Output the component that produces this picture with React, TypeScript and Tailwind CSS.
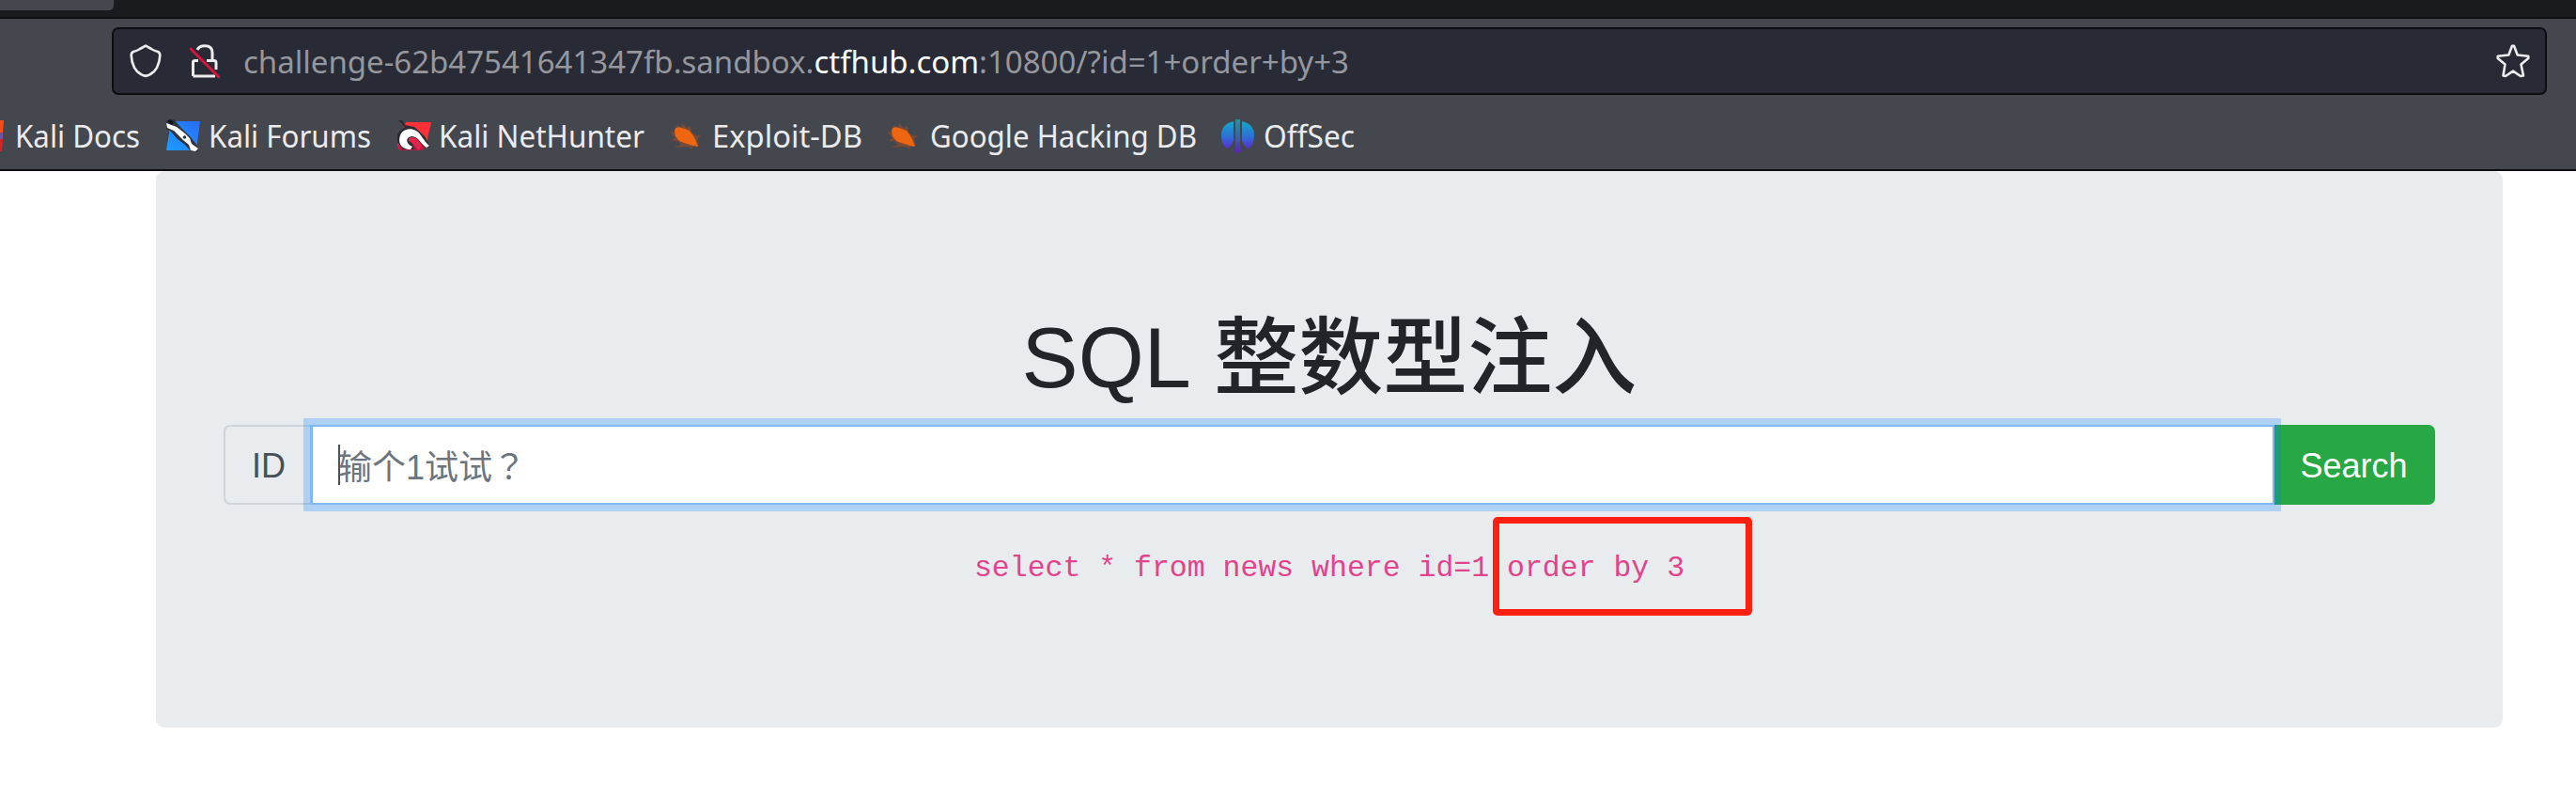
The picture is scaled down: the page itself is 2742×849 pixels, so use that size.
import type { ReactNode } from "react";

const Shield = () => (
  <svg className="h-9 w-[34px]" viewBox="0 0 34 36" fill="none" stroke="#ececee" strokeWidth="2.7" strokeLinejoin="round">
    <path d="M17 1.6L23 5Q26 7 30 8Q32.3 9 32.3 12Q32 19 29 25Q27 29 22 32Q17 35.5 12 32Q7 29 5 25Q2 19 1.7 12Q1.7 9 4 8Q8 7 11 5Z" />
  </svg>
);

const InsecureLock = () => (
  <svg className="h-9 w-8" viewBox="0 0 32 36" fill="none">
    <path d="M8 6Q10 1.8 16 1.8Q24 1.8 24 9V17M3.5 34V19Q3.5 17.5 6 17.5H9M18 17.5H26Q28 17.5 28 20V27M3.5 34H27" stroke="#ececee" strokeWidth="3" />
    <path d="M1 5L31 35" stroke="#d7153f" strokeWidth="3" strokeLinecap="round" />
  </svg>
);

const Star = () => (
  <svg className="h-9 w-9" viewBox="0 0 36 36" fill="none" stroke="#ececee" strokeWidth="2.6" strokeLinejoin="round">
    <path d="M17 1.8H19L22.7 11.5L34.3 12.7V15L26.5 21.4L29 33.5L26 34L18 28.6L10 34L7.5 33.5L9.5 21.4L1.7 15V12.7L13.3 11.5Z" />
  </svg>
);

const ForumsIcon = () => (
  <svg className="h-9 w-9" viewBox="0 0 36 36">
    <defs>
      <linearGradient id="forums" x1="1" y1="0" x2="0" y2="1">
        <stop stopColor="#2a6cf6" />
        <stop offset="1" stopColor="#1b9dff" />
      </linearGradient>
    </defs>
    <path d="M5 2H36L32 33H0L3 15Z" fill="url(#forums)" />
    <path d="M0 1L8 0L15 8L26 19L33 28L34 35L26 34L20 27L12 21L4 12L0 11Z" fill="#30343c" />
    <path d="M0 4L11 8L20 15L25 20L27 26L34 31L31 34L26 33L24 27L18 22L12 16L8 12L1 9Z" fill="#fff" />
    <path d="M1 2L4 0L8 3L6 6Z" fill="#111" />
    <circle cx="19.5" cy="19" r="1.8" fill="#333" />
  </svg>
);

const NetHunterIcon = () => (
  <svg className="h-9 w-9" viewBox="0 0 36 36">
    <path d="M9 3H36L31 25L26 33H2L0 27Z" fill="#ff3038" />
    <path d="M0 20L9 12L27 20L33 28L26 33H2Z" fill="#b71845" />
    <path d="M1 1H5L8 6L18 8L29 18L35 29L29 30L20 20L14 21L18 32H6L0 24V15L8 8Z" fill="#292b33" />
    <path d="M14 32C2 32 0 22 4 15C9 8 20 9 25 17C28 21 31 26 34 28L31 30C25 27 23 18 15 18C8 19 9 26 16 29Z" fill="#fff" />
    <path d="M12 20Q20 16 26 29L22 33Q18 26 12 23Z" fill="#e5244c" />
  </svg>
);

const BugIcon = () => (
  <svg className="h-[30px] w-[34px]" viewBox="0 0 34 30">
    <path d="M7 3L12 6L13 1L18 6L22 4L23 11L28 14L34 15L29 17L31 25L25 26L24 29L20 26L4 27L12 24L8 20L2 20L6 16L0 11L5 10Z" fill="#a9501f" opacity=".5" />
    <path d="M5 8Q7 4 13 6L21 9L24 13L27 18L30 26L25 25L18 23L10 20L6 15Z" fill="#ee6512" />
  </svg>
);

const OffSecIcon = () => (
  <svg className="h-9 w-[35px]" viewBox="0 0 35 36">
    <defs>
      <linearGradient id="offsec" x1="0" y1="0" x2="0" y2="36" gradientUnits="userSpaceOnUse">
        <stop offset=".05" stopColor="#12a9c8" />
        <stop offset=".5" stopColor="#2d71d6" />
        <stop offset="1" stopColor="#6714d1" />
      </linearGradient>
    </defs>
    <path d="M13 2Q0 5 0 17Q0 27 6 31Q10 30 13 23ZM22 2Q35 5 35 17Q35 27 29 31Q25 30 22 23Z" fill="url(#offsec)" />
    <path d="M15 0H20L20 26L21 34Q17.5 38 14 34L15 26Z" fill="url(#offsec)" opacity=".75" />
  </svg>
);

const Bookmark = ({ icon, label, width, className }: { icon?: ReactNode; label: string; width: number; className: string }) => (
  <div className={`flex shrink-0 items-center ${className}`}>
    {icon}
    <svg className="h-12 shrink-0 overflow-visible" style={{ width }} aria-label={label}>
      <text x="0" y="36" textLength={width} lengthAdjust="spacingAndGlyphs" fill="#ebebed" className="font-['Noto_Sans'] text-[33px]">
        {label}
      </text>
    </svg>
  </div>
);

export default function App() {
  return (
    <div className="h-[849px] w-[2742px] overflow-hidden bg-white font-['Liberation_Sans','Noto_Sans_CJK_SC',sans-serif]">
      <header className="flex h-[182px] flex-col border-b-2 border-[#0c0e12] bg-[#44474e]">
        <div className="h-5 shrink-0 border-b-2 border-[#0e0f13] bg-[#1a1b1f]">
          <div className="h-[11px] w-[121px] rounded-br-[5px] bg-[#44474e]" />
        </div>
        <div className="mt-[9px] ml-[119px] flex h-[72px] w-[2592px] shrink-0 items-center rounded-[7px] border-2 border-[#0c0e12] bg-[#282a36] pr-4 pl-[17px]">
          <Shield />
          <div className="ml-[30px]"><InsecureLock /></div>
          <div className="ml-[25px] flex-1 whitespace-pre pt-[2px] font-['Noto_Sans'] text-[33px] leading-[48px] text-[#96979d]">
            challenge-62b47541641347fb.sandbox.<span className="text-white">ctfhub.com</span>:10800/?id=1+order+by+3
          </div>
          <Star />
        </div>
        <nav className="mt-5 flex h-12 items-center">
          <svg className="h-9 w-1 shrink-0" viewBox="0 0 4 36">
            <path d="M0 1H4L3 14H0Z" fill="#f84b16" />
            <path d="M0 14H3V21H0Z" fill="#73509c" />
            <path d="M0 21H3L2 34H0Z" fill="#d52323" />
          </svg>
          <Bookmark className="ml-3" label="Kali Docs" width={133} />
          <Bookmark className="ml-7 gap-[9px]" icon={<ForumsIcon />} label="Kali Forums" width={173} />
          <Bookmark className="ml-7 gap-2" icon={<NetHunterIcon />} label="Kali NetHunter" width={219} />
          <Bookmark className="ml-[27px] gap-[11px]" icon={<BugIcon />} label="Exploit-DB" width={160} />
          <Bookmark className="ml-[26px] gap-3" icon={<BugIcon />} label="Google Hacking DB" width={284} />
          <Bookmark className="ml-[26px] gap-[10px]" icon={<OffSecIcon />} label="OffSec" width={97} />
        </nav>
      </header>
      <main className="ml-[166px] h-[592px] w-[2498px] rounded-[9px] bg-[#e8ecef] px-[72px] pt-[144px] text-[36px] text-[#212529]">
        <h1 className="h-[126px] pt-px text-center text-[90px] leading-[108px] font-medium [word-spacing:3px]">SQL 整数型注入</h1>
        <div className="flex h-[85px]">
          <div className="flex w-[92px] items-center rounded-l-[7px] border-2 border-r-0 border-[#ced4da] pt-[2px] pl-7 text-[#495057]">ID</div>
          <div className="z-10 flex flex-1 items-center border-2 border-l-[3px] border-[#80b8f5] bg-white pl-[27px] text-[#6c757d] shadow-[0_0_0_7px_rgba(0,123,255,0.25)]">
            <span className="h-[43px] w-[2px] bg-[#495057]" />
            <span className="-ml-[2px] pt-[2px]">输个1试试<span className="font-['Noto_Sans_CJK_TC',sans-serif]" lang="zh-TW">？</span></span>
          </div>
          <button className="h-[85px] w-[171px] rounded-r-[7px] bg-[#28a745] pt-[2px] pr-[2px] text-white">Search</button>
        </div>
        <div className="relative mt-[40px] text-center">
          <code className="block pt-px font-['Liberation_Mono',monospace] text-[31.5px] leading-[54px] text-[#e2438c]">select * from news where id=1 order by 3</code>
          <div className="absolute top-[-27px] left-[1351px] h-[105px] w-[276px] rounded-[5px] border-7 border-[#ff2012]" />
        </div>
      </main>
    </div>
  );
}
